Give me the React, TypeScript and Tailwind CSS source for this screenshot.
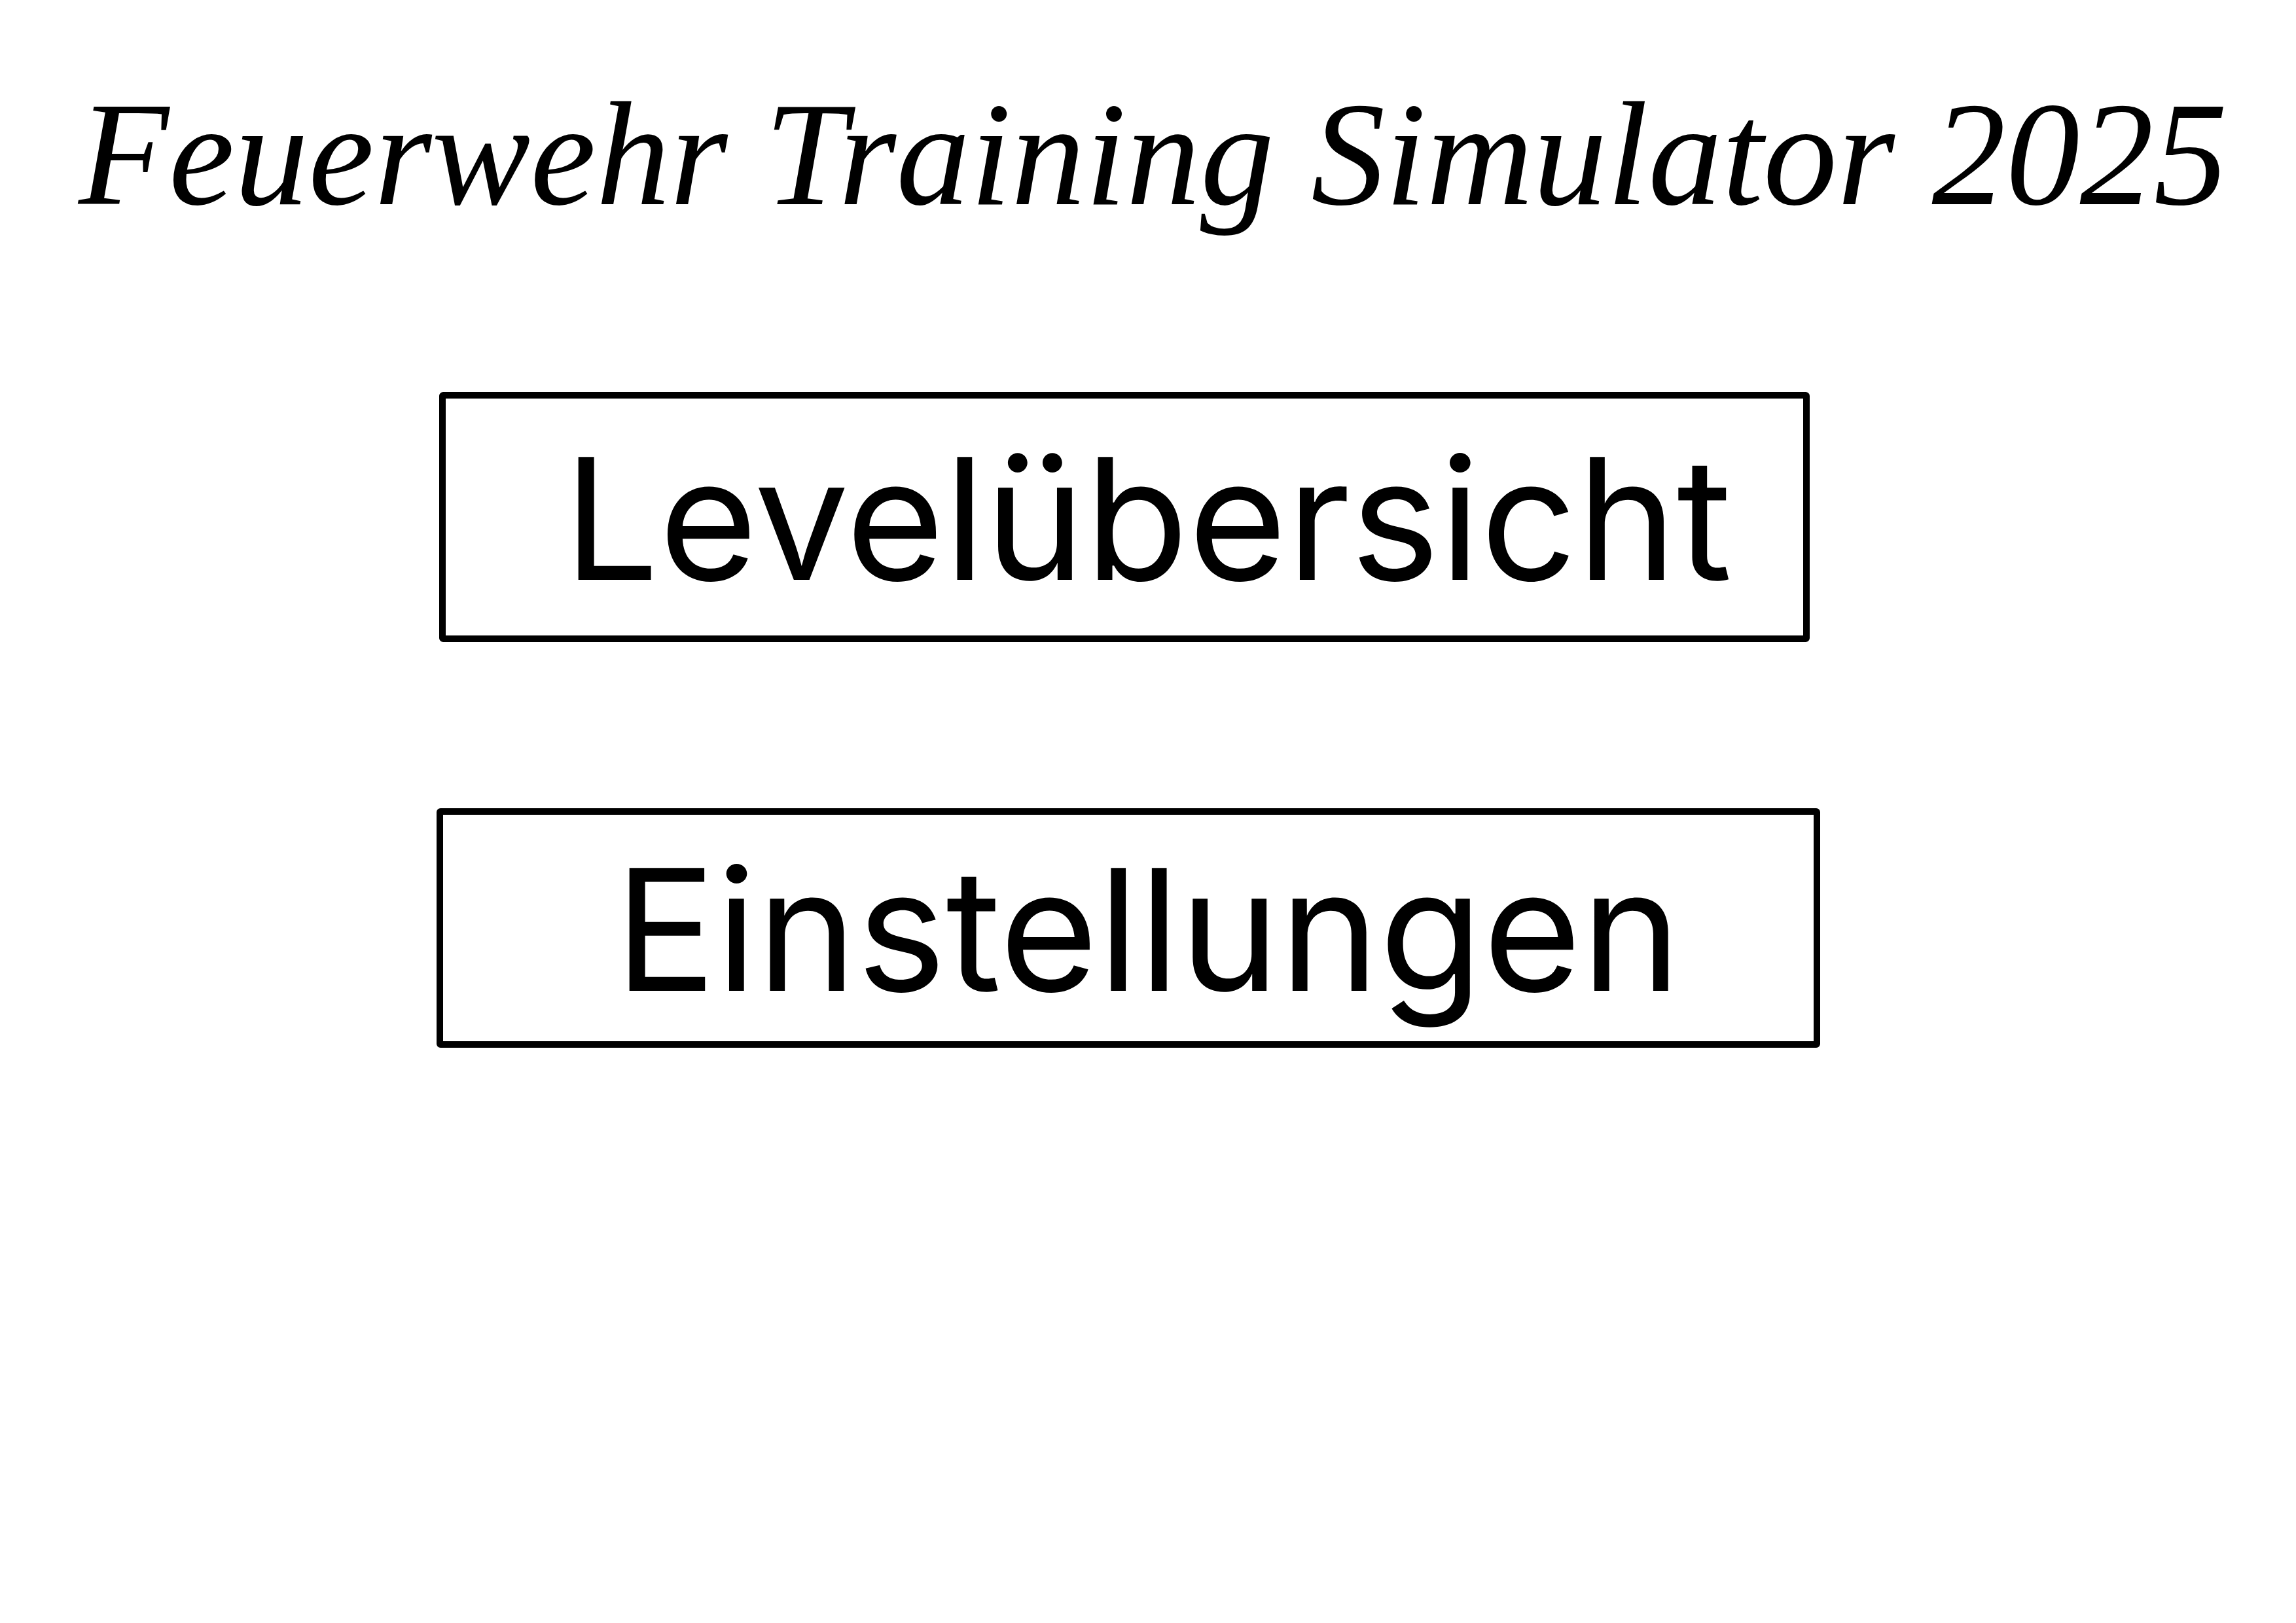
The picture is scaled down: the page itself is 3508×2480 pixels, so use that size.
const buttonBase =
  "flex w-full items-center rounded-[6px] border-[10px] border-black pt-[3px] font-['Inter',sans-serif] text-[258px] leading-none";

export default function App() {
  return (
    <main className="flex min-h-screen w-full flex-col bg-white pt-[96px] text-black">
      <h1 className="pl-[120px] font-['Z003','URW_Chancery_L','Monotype_Corsiva','Liberation_Serif',serif] text-[226px] leading-[280px] whitespace-nowrap italic">
        Feuerwehr Training Simulator 2025
      </h1>
      <nav aria-label="Hauptmenü" className="mt-[223px] flex w-full flex-col gap-[254px] pl-[667px]">
        <div className="flex px-1">
          <button type="button" className={`${buttonBase} h-[382px] max-w-[2094px] pl-[180px]`}>
            Levelübersicht
          </button>
        </div>
        <button type="button" className={`${buttonBase} h-[366px] max-w-[2114px] pl-[262px]`}>
          Einstellungen
        </button>
      </nav>
    </main>
  );
}
